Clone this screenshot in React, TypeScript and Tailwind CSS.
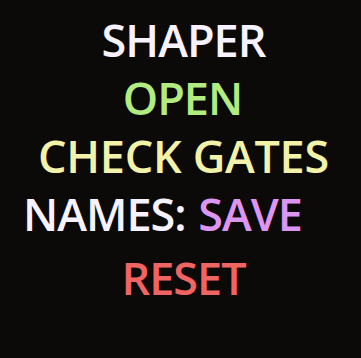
import React from "react";

export default function App() {
  return (
    <div
      className="w-[361px] h-[358px] bg-[#0c0909] overflow-hidden flex flex-col items-center pt-[11px] text-[45px] leading-[58px] font-semibold tracking-[-1px]"
      style={{ fontFamily: '"Open Sans", "Noto Sans", sans-serif' }}
    >
      <div className="text-[#f6f2ff] ml-[6px]">SHAPER</div>
      <div className="text-[#b2ec80] ml-[4px]">OPEN</div>
      <div className="text-[#f2f2a8] ml-[6px] tracking-[-0.3px]">CHECK GATES</div>
      <div className="mr-[36px] whitespace-nowrap">
        <span className="text-[#f6f2ff]">NAMES:</span>
        <span className="text-[#dc96f2] ml-[2px]"> SAVE</span>
      </div>
      <div className="text-[#f06462] ml-[6px] mt-[6px]">RESET</div>
    </div>
  );
}
